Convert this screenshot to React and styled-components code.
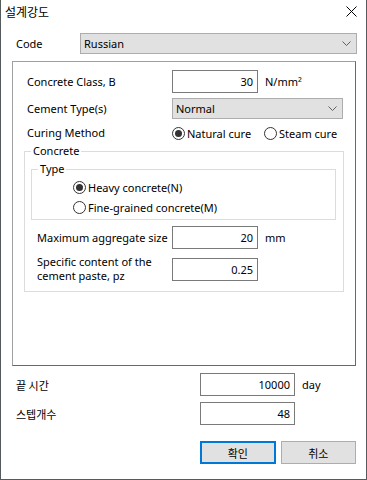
import React from 'react';
import styled, { createGlobalStyle } from 'styled-components';

const GlobalStyle = createGlobalStyle`
  body {
    margin: 0;
    background: #ffffff;
    font-family: "Noto Sans", "Noto Sans CJK KR", sans-serif;
    font-size: 11px;
    color: #000000;
  }
`;

const Window = styled.div`
  box-sizing: border-box;
  width: 367px;
  height: 480px;
  background: #ffffff;
  border: 1px solid #555a5c;
  border-top: none;
  display: flex;
  flex-direction: column;
`;

const TitleBar = styled.div`
  height: 30px;
  display: flex;
  align-items: center;
  justify-content: space-between;
  padding: 0 9px 0 4px;
  margin-top: -4px;
`;

const Title = styled.span`
  font-family: "Noto Sans CJK KR", sans-serif;
  font-size: 12px;
`;

const Body = styled.div`
  padding: 0 10px 0 11px;
  display: flex;
  flex-direction: column;
`;

const Row = styled.div`
  display: grid;
  grid-template-columns: ${p => p.$label}px auto auto;
  align-items: center;
  justify-content: start;
  margin-top: ${p => p.$top || 0}px;
  padding-left: ${p => p.$left || 0}px;
`;

const Label = styled.span`
  font-family: ${p => (p.$ko ? '"Noto Sans CJK KR", sans-serif' : 'inherit')};
  line-height: 14px;
`;

const Unit = styled.span`
  margin-left: 7px;
`;

const Combo = styled.div`
  box-sizing: border-box;
  width: ${p => p.$width}px;
  height: 21px;
  background: #e1e1e1;
  border: 1px solid #adadad;
  display: flex;
  align-items: center;
  justify-content: space-between;
  padding: 0 5px 0 3px;
`;

const Input = styled.div`
  box-sizing: border-box;
  width: ${p => p.$width}px;
  height: 23px;
  border: 1px solid #7a7a7a;
  background: #ffffff;
  display: flex;
  align-items: center;
  justify-content: flex-end;
  padding-right: 4px;
`;

const Panel = styled.div`
  box-sizing: border-box;
  height: 305px;
  margin-top: 7px;
  border-top: 1px solid #a0a0a0;
  border-left: 1px solid #a0a0a0;
  border-right: 1px solid #696969;
  border-bottom: 1px solid #696969;
  padding: 0 0 0 14px;
  display: flex;
  flex-direction: column;
`;

const Group = styled.fieldset`
  box-sizing: border-box;
  width: ${p => p.$width}px;
  margin: ${p => p.$top}px 0 0 ${p => p.$left}px;
  padding: 0 0 ${p => p.$bottom}px 0;
  border: 1px solid #dcdcdc;
  min-inline-size: 0;
`;

const Legend = styled.legend`
  margin-left: 6px;
  padding: 0 2px;
  line-height: 14px;
`;

const RadioList = styled.div`
  display: flex;
  flex-direction: column;
  gap: 4px;
  padding: 3px 0 0 41px;
`;

const RadioOption = styled.div`
  display: flex;
  align-items: center;
  gap: 2px;
  height: 16px;
  width: ${p => (p.$width ? `${p.$width}px` : 'auto')};
`;

const RadioCircle = styled.span`
  box-sizing: border-box;
  width: 13px;
  height: 13px;
  border-radius: 50%;
  border: 1px solid #333333;
  background: #ffffff;
  display: flex;
  align-items: center;
  justify-content: center;

  &::after {
    content: '';
    width: 7px;
    height: 7px;
    border-radius: 50%;
    background: #333333;
    display: ${p => (p.$checked ? 'block' : 'none')};
  }
`;

const RadioRow = styled.div`
  display: flex;
  align-items: center;
`;

const ButtonRow = styled.div`
  display: flex;
  gap: 5px;
  margin: 16px 0 0 188px;
`;

const Button = styled.div`
  box-sizing: border-box;
  width: 76px;
  height: 23px;
  background: #e1e1e1;
  border: ${p => (p.$primary ? '2px solid #0078d7' : '1px solid #adadad')};
  display: flex;
  align-items: center;
  justify-content: center;
  font-family: "Noto Sans CJK KR", sans-serif;
  font-size: 11px;
`;

const Chevron = () => (
  <svg width="9" height="5" viewBox="0 0 9 5">
    <polyline points="0.5,0.5 4.5,4.5 8.5,0.5" fill="none" stroke="#606060" strokeWidth="1" />
  </svg>
);

const CloseIcon = () => (
  <svg width="11" height="11" viewBox="0 0 11 11">
    <path d="M0.5 0.5 L10.5 10.5 M10.5 0.5 L0.5 10.5" stroke="#000" strokeWidth="1" />
  </svg>
);

const Radio = ({ checked, label, width }) => (
  <RadioOption $width={width}>
    <RadioCircle $checked={checked} />
    <span>{label}</span>
  </RadioOption>
);

const App = () => (
  <Window>
    <GlobalStyle />
    <TitleBar>
      <Title>설계강도</Title>
      <CloseIcon />
    </TitleBar>
    <Body>
      <Row $label={64} $top={7} $left={4}>
        <Label>Code</Label>
        <Combo $width={277}>
          <span>Russian</span>
          <Chevron />
        </Combo>
      </Row>

      <Panel>
        <Row $label={145} $top={8}>
          <Label>Concrete Class, B</Label>
          <Input $width={86}>30</Input>
          <Unit>N/mm²</Unit>
        </Row>
        <Row $label={145} $top={5}>
          <Label>Cement Type(s)</Label>
          <Combo $width={171}>
            <span>Normal</span>
            <Chevron />
          </Combo>
        </Row>
        <Row $label={145} $top={6}>
          <Label>Curing Method</Label>
          <RadioRow>
            <Radio checked label="Natural cure" width={92} />
            <Radio label="Steam cure" />
          </RadioRow>
        </Row>

        <Group $width={320} $top={3} $left={-3} $bottom={8}>
          <Legend>Concrete</Legend>
          <Group $width={305} $top={4} $left={6} $bottom={4}>
            <Legend>Type</Legend>
            <RadioList>
              <Radio checked label="Heavy concrete(N)" />
              <Radio label="Fine-grained concrete(M)" />
            </RadioList>
          </Group>
          <Row $label={135} $top={6} $left={12}>
            <Label>Maximum aggregate size</Label>
            <Input $width={86}>20</Input>
            <Unit>mm</Unit>
          </Row>
          <Row $label={135} $top={6} $left={12}>
            <Label>
              Specific content of the
              <br />
              cement paste, pz
            </Label>
            <Input $width={86}>0.25</Input>
          </Row>
        </Group>
      </Panel>

      <Row $label={184} $top={7} $left={4}>
        <Label $ko>끝 시간</Label>
        <Input $width={95}>10000</Input>
        <Unit>day</Unit>
      </Row>
      <Row $label={184} $top={6} $left={4}>
        <Label $ko>스텝개수</Label>
        <Input $width={95}>48</Input>
      </Row>

      <ButtonRow>
        <Button $primary>확인</Button>
        <Button>취소</Button>
      </ButtonRow>
    </Body>
  </Window>
);

export default App;
